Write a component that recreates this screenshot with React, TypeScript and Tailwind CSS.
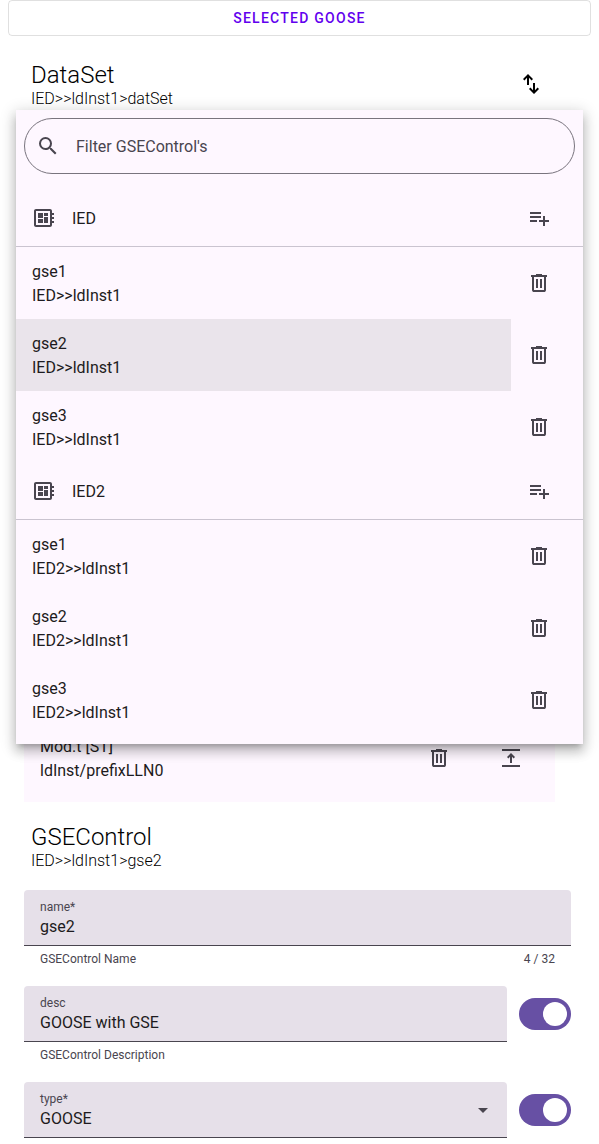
import React from 'react';

const paths = {
  swap: 'M8 13V5.83L5.43 8.4 4 7l5-5 5 5-1.43 1.4L10 5.83V13H8Zm7 9-5-5 1.43-1.4L14 18.18V11h2v7.18l2.58-2.58L20 17l-5 5Z',
  search:
    'M15.5 14h-.79l-.28-.27A6.47 6.47 0 0 0 16 9.5 6.5 6.5 0 1 0 9.5 16c1.61 0 3.09-.59 4.23-1.57l.27.28v.79l5 4.99L20.49 19l-4.99-5zm-6 0C7.01 14 5 11.99 5 9.5S7.01 5 9.5 5 14 7.01 14 9.5 11.99 14 9.5 14z',
  board:
    'M22 9V7h-2V5c0-1.1-.9-2-2-2H4c-1.1 0-2 .9-2 2v14c0 1.1.9 2 2 2h14c1.1 0 2-.9 2-2v-2h2v-2h-2v-2h2v-2h-2V9h2zm-4 10H4V5h14v14zM6 13h5v4H6zm6-6h4v3h-4zM6 7h5v5H6zm6 4h4v6h-4z',
  add: 'M3 16v-2h7v2H3zm0-4v-2h11v2H3zm0-4V6h11v2H3zm13 12v-4h-4v-2h4v-4h2v4h4v2h-4v4h-2z',
  trash:
    'M7 21c-.55 0-1.02-.2-1.41-.59C5.2 20.02 5 19.55 5 19V6H4V4h5V3h6v1h5v2h-1v13c0 .55-.2 1.02-.59 1.41-.39.39-.86.59-1.41.59H7ZM17 6H7v13h10V6ZM9 17h2V8H9v9Zm4 0h2V8h-2v9Z',
  top: 'M3 5V3h18v2H3Zm0 16v-2h18v2H3Zm8-4v-6.2l-1.6 1.6L8 11l4-4 4 4-1.4 1.4-1.6-1.6V17h-2Z',
};

function Icon({ name, className = 'text-[#49454f]' }: { name: keyof typeof paths; className?: string }) {
  return (
    <svg viewBox="0 0 24 24" fill="currentColor" className={`size-6 shrink-0 ${className}`}>
      <path d={paths[name]} />
    </svg>
  );
}

function Heading({ title, path }: { title: string; path: string }) {
  return (
    <div className="font-light text-black">
      <h2 className="text-2xl leading-7">{title}</h2>
      <p className="text-base leading-[19px]">{path}</p>
    </div>
  );
}

function Group({ ied, selected }: { ied: string; selected?: string }) {
  return (
    <section>
      <header className="box-content flex h-14 items-center border-b border-[#cac4d0] pl-4 pr-8">
        <Icon name="board" />
        <span className="ml-4 flex-1 pt-0.5">{ied}</span>
        <Icon name="add" />
      </header>
      {['gse1', 'gse2', 'gse3'].map((gse) => (
        <div key={gse} className="flex h-[72px] items-center pr-8">
          <div
            className={`mr-4 flex h-full flex-1 flex-col justify-center pl-4 pt-0.5 leading-6 ${
              gse === selected ? 'bg-[#eae4eb]' : ''
            }`}
          >
            <span>{gse}</span>
            <span>{ied}&gt;&gt;ldInst1</span>
          </div>
          <Icon name="trash" />
        </div>
      ))}
    </section>
  );
}

function Menu() {
  return (
    <div className="absolute left-4 right-4 top-[110px] z-10 bg-[#fef7ff] py-2 shadow-[0_5px_5px_-3px_rgba(0,0,0,0.2),0_8px_10px_1px_rgba(0,0,0,0.14),0_3px_14px_2px_rgba(0,0,0,0.16)]">
      <div className="mx-2 mb-4 flex h-14 items-center rounded-full border border-[#79747e] pl-[11px] text-[#49454f]">
        <Icon name="search" />
        <span className="ml-4 pt-0.5">Filter GSEControl&apos;s</span>
      </div>
      <Group ied="IED" selected="gse2" />
      <Group ied="IED2" />
    </div>
  );
}

interface FieldProps {
  label: string;
  value: string;
  help?: string;
  count?: string;
  toggle?: boolean;
  select?: boolean;
}

function Field({ label, value, help, count, toggle, select }: FieldProps) {
  return (
    <div className="flex h-24 gap-3">
      <div className="flex-1">
        <div className="flex h-14 items-center rounded-t border-b border-[#49454f] bg-[#e6e0e9] px-4 pt-0.5">
          <div className="flex flex-1 flex-col pt-px">
            <span className="text-xs leading-4 text-[#49454f]">{label}</span>
            <span className="leading-6">{value}</span>
          </div>
          {select && (
            <svg viewBox="0 0 10 5" className="mr-[3px] h-[5px] w-2.5 fill-[#49454f]">
              <path d="M0 0h10L5 5z" />
            </svg>
          )}
        </div>
        <div className="flex justify-between px-4 pt-[5px] text-xs leading-4 text-[#49454f]">
          <span>{help}</span>
          <span>{count}</span>
        </div>
      </div>
      {toggle && (
        <div className="mt-3 flex h-8 w-[52px] items-center justify-end rounded-full bg-[#6750a4] pr-1">
          <div className="size-6 rounded-full bg-white" />
        </div>
      )}
    </div>
  );
}

export default function App() {
  return (
    <div className="relative h-[1144px] w-[599px] overflow-hidden bg-white font-[Roboto,sans-serif] text-base text-[#1d1b20]">
      <button className="mx-2 flex h-9 w-[583px] items-center justify-center rounded border border-black/12 text-sm font-medium tracking-[1.25px] text-[#6200ee]">
        SELECTED GOOSE
      </button>
      <div className="flex h-[686px] items-start justify-between pl-[31px] pr-14 pt-[25px]">
        <Heading title="DataSet" path="IED>>ldInst1>datSet" />
        <Icon name="swap" className="mt-[11px] text-black" />
      </div>
      <div className="ml-6 flex h-[79.6px] w-[531px] items-start bg-[#fef7ff] px-4">
        <div className="mt-[12.5px] flex flex-1 flex-col leading-6">
          <span>Mod.t [ST]</span>
          <span>ldInst/prefixLLN0</span>
        </div>
        <div className="mt-6 flex gap-12 pr-4">
          <Icon name="trash" />
          <Icon name="top" />
        </div>
      </div>
      <div className="pl-[31px] pt-[21.4px]">
        <Heading title="GSEControl" path="IED>>ldInst1>gse2" />
      </div>
      <div className="ml-6 mt-5 w-[547px]">
        <Field label="name*" value="gse2" help="GSEControl Name" count="4 / 32" />
        <Field label="desc" value="GOOSE with GSE" help="GSEControl Description" toggle />
        <Field label="type*" value="GOOSE" toggle select />
      </div>
      <Menu />
    </div>
  );
}
